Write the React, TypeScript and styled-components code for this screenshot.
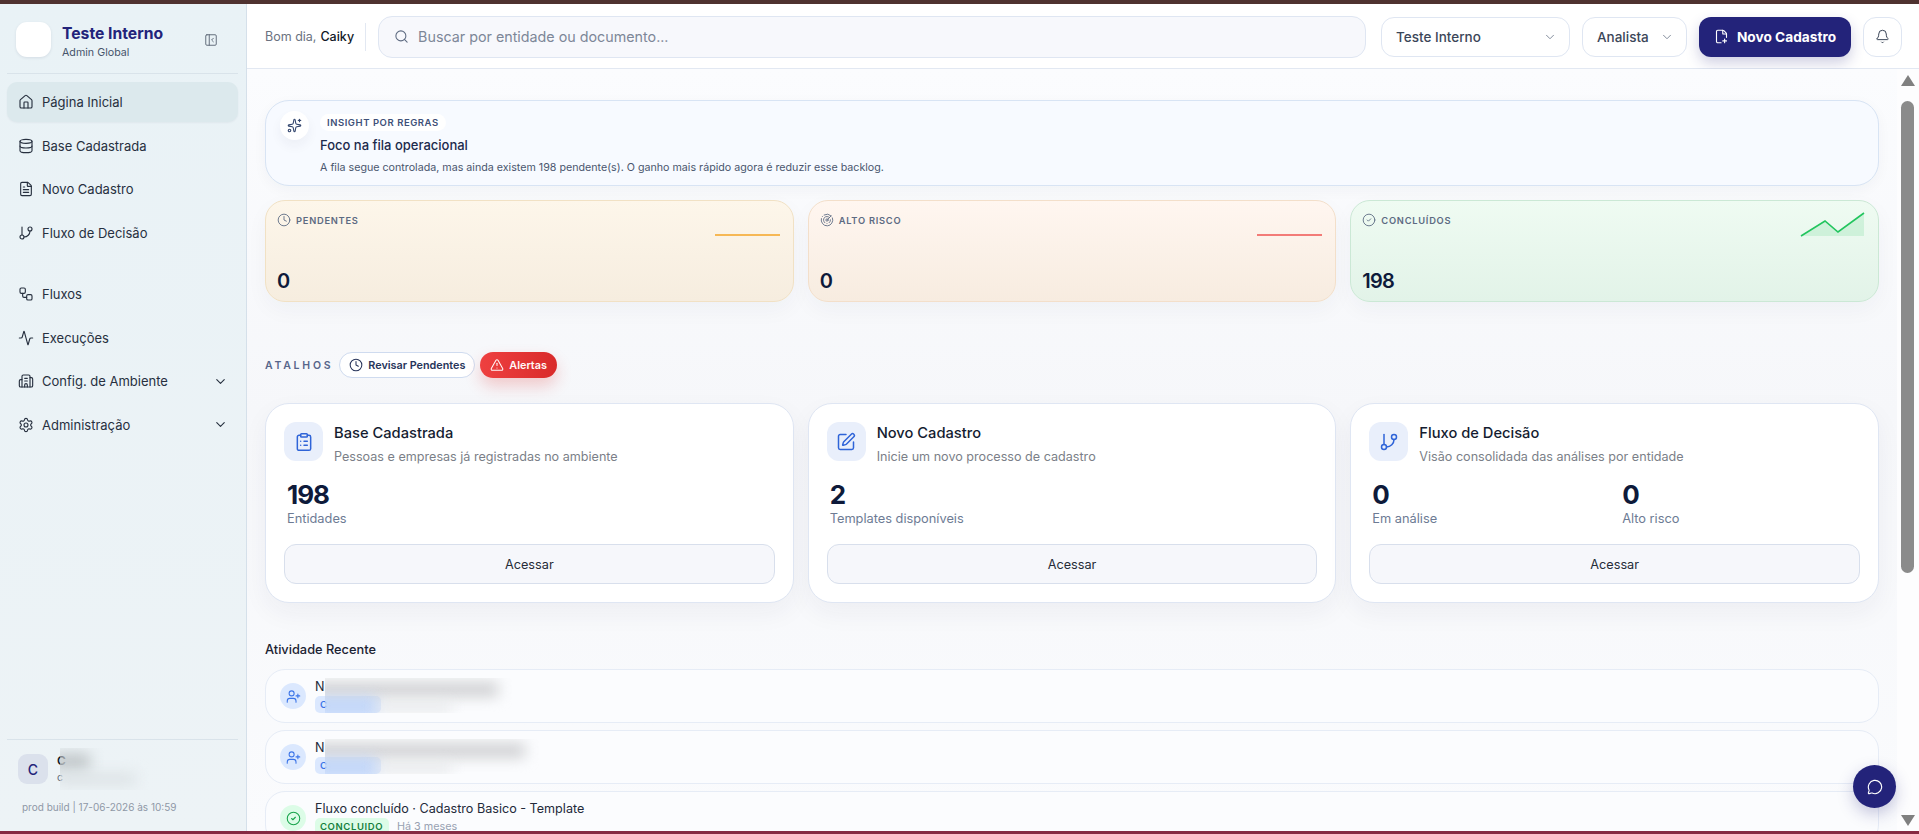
import React from "react";
import styled, { createGlobalStyle } from "styled-components";
import {
  Activity,
  Bell,
  Building2,
  ChevronDown,
  CircleCheck,
  ClipboardList,
  Clock,
  Database,
  FilePlusCorner,
  FileText,
  GitBranch,
  House,
  MessageCircle,
  PanelLeftClose,
  Radar,
  Search,
  Settings,
  Sparkles,
  SquarePen,
  TriangleAlert,
  UserPlus,
  Workflow,
} from "lucide-react";

const NAVY = "#23237a";
const FONT = `Inter, "Noto Sans", "Liberation Sans", sans-serif`;

const GlobalStyle = createGlobalStyle`
  html, body {
    margin: 0;
    padding: 0;
    height: 100%;
    overflow: hidden;
    font-family: ${FONT};
    color: #111827;
  }
  #root { height: 100%; }
  * { box-sizing: border-box; }
`;

const Page = styled.div`
  height: 100vh;
  display: flex;
  flex-direction: column;
`;

const WindowStrip = styled.div<{ $color: string; $height: number }>`
  flex: none;
  height: ${(p) => p.$height}px;
  background: ${(p) => p.$color};
`;

const Body = styled.div`
  position: relative;
  flex: 1;
  min-height: 0;
  display: flex;
`;

/* Sidebar */
const Sidebar = styled.aside`
  flex: none;
  width: 247px;
  display: flex;
  flex-direction: column;
  padding: 0 8px 0 7px;
  background: linear-gradient(180deg, #e9f2f6 0%, #edf3f6 100%);
  border-right: 1px solid #d5e0ea;
`;

const Brand = styled.div`
  height: 70px;
  display: flex;
  align-items: flex-start;
  padding: 18px 0 0 9px;
  border-bottom: 1px solid #d9e3ea;
  flex: none;
`;

const LogoBox = styled.div`
  width: 35px;
  height: 35px;
  border-radius: 11px;
  background: #fff;
  box-shadow: 0 1px 3px rgba(30, 41, 80, 0.1);
  flex: none;
`;

const BrandText = styled.div`
  margin-left: 11px;
  padding-top: 2px;
  flex: 1;
  display: flex;
  flex-direction: column;
`;

const BrandTitle = styled.div`
  font-size: 15.7px;
  line-height: 20px;
  font-weight: 700;
  color: ${NAVY};
`;

const BrandSub = styled.div`
  font-size: 10.7px;
  line-height: 16px;
  margin-top: 1px;
  color: #46546b;
`;

const CollapseButton = styled.span`
  display: flex;
  margin: 11px 20px 0 0;
  color: #5b6675;
`;

const Nav = styled.nav`
  display: flex;
  flex-direction: column;
  gap: 3.5px;
  padding-top: 8px;
`;

const NavItem = styled.div<{ $active?: boolean; $spaced?: boolean }>`
  height: 40px;
  display: flex;
  align-items: center;
  gap: 8px;
  padding: 0 10px 0 11px;
  border-radius: 10px;
  font-size: 13px;
  color: #27303f;
  background: ${(p) => (p.$active ? "#dce9ed" : "transparent")};
  margin-top: ${(p) => (p.$spaced ? "18px" : "0")};
  box-shadow: ${(p) => (p.$active ? "0 1px 2px rgba(30,41,80,.05)" : "none")};
`;

const NavLabel = styled.span`
  flex: 1;
`;

const UserFooter = styled.div`
  margin-top: auto;
  border-top: 1px solid #d9e3ea;
  padding: 12px 0 0 11px;
  height: 92px;
  flex: none;
  position: relative;
`;

const UserRow = styled.div`
  display: flex;
  align-items: center;
  gap: 9px;
`;

const UserAvatar = styled.div`
  width: 30px;
  height: 30px;
  border-radius: 9px;
  background: #dbe1ec;
  color: ${NAVY};
  font-size: 14px;
  font-weight: 500;
  display: flex;
  align-items: center;
  justify-content: center;
`;

const UserText = styled.div`
  display: flex;
  flex-direction: column;
  font-size: 12px;
  line-height: 17px;
  font-weight: 600;
`;

const UserMail = styled.span`
  font-size: 10.5px;
  font-weight: 400;
  color: #5f6b7c;
`;

const BuildInfo = styled.div`
  margin: 15px 0 0 4px;
  font-size: 10px;
  color: #8f98a6;
`;

/* Blurred parts of the screenshot */
const Redaction = styled.div<{ $left: number; $top: number; $width: number; $height: number }>`
  position: absolute;
  left: ${(p) => p.$left}px;
  top: ${(p) => p.$top}px;
  width: ${(p) => p.$width}px;
  height: ${(p) => p.$height}px;
  overflow: hidden;
`;

const Smudge = styled.div<{ $left: number; $top: number; $width: number; $height: number; $color: string; $blur?: number }>`
  position: absolute;
  left: ${(p) => p.$left}px;
  top: ${(p) => p.$top}px;
  width: ${(p) => p.$width}px;
  height: ${(p) => p.$height}px;
  background: ${(p) => p.$color};
  filter: blur(${(p) => p.$blur ?? 7}px);
`;

/* Header */
const Column = styled.div`
  flex: 1;
  min-width: 0;
  display: flex;
  flex-direction: column;
`;

const Header = styled.header`
  flex: none;
  height: 65px;
  display: flex;
  align-items: center;
  gap: 12px;
  padding: 1px 17px 0 18px;
  background: #fff;
  border-bottom: 1px solid #e2e8f2;
`;

const Greeting = styled.div`
  flex: none;
  display: flex;
  align-items: center;
  height: 28px;
  padding-right: 11px;
  border-right: 1px solid #e2e8f2;
  font-size: 12.5px;
  color: #6b7280;
  white-space: nowrap;
`;

const GreetingName = styled.b`
  margin-left: 4px;
  font-weight: 500;
  color: #111827;
`;

const SearchBox = styled.div`
  flex: 1;
  height: 42px;
  display: flex;
  align-items: center;
  gap: 9px;
  margin-right: 3px;
  padding: 0 15px;
  border: 1px solid #dfe6f2;
  border-radius: 14px;
  background: #f7f8fc;
  font-size: 14.3px;
  color: #7d8798;
`;

const SelectBox = styled.div<{ $width: number }>`
  flex: none;
  width: ${(p) => p.$width}px;
  height: 40px;
  display: flex;
  align-items: center;
  justify-content: space-between;
  padding: 0 12px 0 14px;
  background: #fff;
  border: 1px solid #dfe6f2;
  border-radius: 13px;
  font-size: 13.5px;
  font-weight: 500;
  color: #3b4658;
`;

const PrimaryButton = styled.div`
  flex: none;
  width: 152px;
  height: 40px;
  display: flex;
  align-items: center;
  justify-content: center;
  gap: 8px;
  border-radius: 12px;
  background: ${NAVY};
  color: #fff;
  font-size: 13.7px;
  font-weight: 700;
  box-shadow: 0 6px 14px rgba(35, 35, 122, 0.22);
`;

const BellButton = styled.div`
  flex: none;
  width: 39px;
  height: 40px;
  display: flex;
  align-items: center;
  justify-content: center;
  background: #fff;
  border: 1px solid #dfe6f2;
  border-radius: 13px;
  color: #3b4658;
`;

/* Content */
const ContentRow = styled.div`
  flex: 1;
  min-height: 0;
  display: flex;
`;

const Main = styled.main`
  flex: 1;
  min-width: 0;
  overflow: hidden;
  padding: 31px 18px 0 18px;
  background: linear-gradient(180deg, #fbfcfe 0%, #f6f7fa 45%, #fafbfd 100%);
  display: flex;
  flex-direction: column;
`;

const ScrollRail = styled.div`
  flex: none;
  width: 22px;
  display: flex;
  flex-direction: column;
  align-items: center;
  padding: 6px 1px 5px 0;
  background: #fdfdfe;
`;

const ScrollArrow = styled.div<{ $down?: boolean }>`
  flex: none;
  width: 0;
  height: 0;
  border-left: 7.5px solid transparent;
  border-right: 7.5px solid transparent;
  ${(p) => (p.$down ? "border-top: 11px solid #808080;" : "border-bottom: 11px solid #808080;")}
`;

const ScrollThumb = styled.div`
  flex: none;
  width: 13px;
  height: 472px;
  margin-top: 15px;
  margin-bottom: auto;
  border-radius: 7px;
  background: #8b8b8b;
`;

const InsightCard = styled.section`
  flex: none;
  height: 86px;
  display: flex;
  gap: 11px;
  padding: 10px 14px;
  background: #f7faff;
  border: 1px solid #d8e4f4;
  border-radius: 24px;
  box-shadow: 0 4px 14px rgba(30, 41, 80, 0.04);
`;

const InsightIcon = styled.div`
  width: 29px;
  height: 29px;
  flex: none;
  border-radius: 50%;
  background: #fff;
  color: #33466e;
  display: flex;
  align-items: center;
  justify-content: center;
  box-shadow: 0 6px 12px rgba(30, 41, 80, 0.05);
`;

const InsightBody = styled.div`
  display: flex;
  flex-direction: column;
  align-items: flex-start;
`;

const InsightPill = styled.span`
  margin-top: 3px;
  height: 17px;
  display: flex;
  align-items: center;
  padding: 0 7px;
  border-radius: 9px;
  background: #fff;
  font-size: 9.5px;
  font-weight: 600;
  letter-spacing: 0.55px;
  color: #3e5078;
`;

const InsightTitle = styled.div`
  margin-top: 5px;
  font-size: 13px;
  line-height: 18px;
  font-weight: 500;
  color: #1c2a4c;
`;

const InsightText = styled.div`
  margin-top: 6px;
  font-size: 10.7px;
  line-height: 15px;
  color: #4a566e;
`;

const StatGrid = styled.div`
  flex: none;
  display: grid;
  grid-template-columns: repeat(3, 1fr);
  gap: 14px;
  margin-top: 14px;
`;

const StatCard = styled.div<{ $from: string; $to: string; $border: string }>`
  position: relative;
  height: 102px;
  padding: 12px 11px 7px;
  display: flex;
  flex-direction: column;
  justify-content: space-between;
  border: 1px solid ${(p) => p.$border};
  border-radius: 20px;
  background: linear-gradient(180deg, ${(p) => p.$from}, ${(p) => p.$to});
  box-shadow: 0 8px 22px rgba(30, 41, 80, 0.04);
`;

const StatLabel = styled.div`
  display: flex;
  align-items: center;
  gap: 5px;
  height: 14px;
  font-size: 9.3px;
  font-weight: 600;
  letter-spacing: 0.75px;
  color: #5c6a82;
`;

const StatValue = styled.div`
  font-size: 20px;
  line-height: 26px;
  font-weight: 600;
  letter-spacing: -0.8px;
  color: #0e1a3a;
`;

const Spark = styled.svg`
  position: absolute;
  right: 13px;
  top: 11px;
  width: 65px;
  height: 26px;
`;

const ShortcutBar = styled.div`
  flex: none;
  display: flex;
  align-items: center;
  margin-top: 50px;
`;

const ShortcutTitle = styled.span`
  font-size: 10.5px;
  font-weight: 600;
  letter-spacing: 2.75px;
  color: #57658a;
  margin-right: 6px;
`;

const ShortcutPill = styled.div<{ $danger?: boolean }>`
  height: 26px;
  display: flex;
  align-items: center;
  gap: 5px;
  margin-right: 5px;
  padding: 0 ${(p) => (p.$danger ? "10px" : "9px")};
  border-radius: 13px;
  font-size: 10.8px;
  font-weight: 600;
  ${(p) =>
    p.$danger
      ? `color: #fff8f8;
         background: linear-gradient(90deg, #ee4040, #d92a2a);
         box-shadow: 0 8px 16px rgba(220, 38, 38, 0.22);`
      : `color: #27345a;
         background: #fff;
         border: 1px solid #cfdbef;`}
`;

const CardGrid = styled.div`
  flex: none;
  display: grid;
  grid-template-columns: repeat(3, 1fr);
  gap: 14px;
  margin-top: 25px;
`;

const ActionCard = styled.div`
  height: 200px;
  padding: 18px 18px 18px;
  display: flex;
  flex-direction: column;
  background: #fff;
  border: 1px solid #dfe6f3;
  border-radius: 24px;
  box-shadow: 0 10px 26px rgba(30, 41, 80, 0.05);
`;

const CardHead = styled.div`
  display: flex;
  gap: 11px;
`;

const CardIcon = styled.div`
  width: 39px;
  height: 39px;
  flex: none;
  display: flex;
  align-items: center;
  justify-content: center;
  border-radius: 12px;
  background: #e9effb;
  color: #2f64d8;
`;

const CardTitle = styled.div`
  margin-top: 1px;
  font-size: 14.7px;
  line-height: 20px;
  font-weight: 500;
  color: #141c30;
`;

const CardDesc = styled.div`
  margin-top: 6px;
  font-size: 12.6px;
  line-height: 16px;
  color: #7b7f88;
`;

const Metrics = styled.div`
  display: grid;
  grid-template-columns: repeat(2, 1fr);
  gap: 12px;
  margin-top: 15px;
  padding-left: 3px;
`;

const Metric = styled.div`
  display: flex;
  flex-direction: column;
`;

const MetricValue = styled.div`
  font-size: 26px;
  line-height: 30px;
  font-weight: 700;
  letter-spacing: -1px;
  color: #0e1a3a;
`;

const MetricLabel = styled.div`
  margin-top: 1px;
  font-size: 12.8px;
  line-height: 16px;
  color: #6d7b94;
`;

const AccessButton = styled.div`
  margin-top: auto;
  height: 40px;
  display: flex;
  align-items: center;
  justify-content: center;
  background: #f6f7fb;
  border: 1px solid #d8dfec;
  border-radius: 12px;
  font-size: 12.7px;
  font-weight: 400;
  color: #262c38;
`;

const SectionTitle = styled.h2`
  flex: none;
  margin: 39px 0 0;
  font-size: 12.8px;
  line-height: 16px;
  font-weight: 500;
  color: #1c2333;
`;

const ActivityList = styled.div`
  flex: none;
  display: flex;
  flex-direction: column;
  gap: 7px;
  margin-top: 11px;
`;

const ActivityRow = styled.div`
  position: relative;
  flex: none;
  height: 54px;
  display: flex;
  align-items: center;
  gap: 9px;
  padding: 0 14px;
  background: #fbfcfe;
  border: 1px solid #e6ecf6;
  border-radius: 20px;
`;

const ActivityIcon = styled.div<{ $tone: "blue" | "green" }>`
  width: 26px;
  height: 26px;
  flex: none;
  display: flex;
  align-items: center;
  justify-content: center;
  border-radius: 50%;
  background: ${(p) => (p.$tone === "blue" ? "#dbe8fe" : "#dcfce7")};
  color: ${(p) => (p.$tone === "blue" ? "#3b74e8" : "#16a34a")};
`;

const ActivityBody = styled.div`
  display: flex;
  flex-direction: column;
  gap: 1px;
`;

const ActivityTitle = styled.div`
  font-size: 12.6px;
  line-height: 16px;
  color: #232a3a;
`;

const ActivityMeta = styled.div`
  display: flex;
  align-items: center;
  gap: 8px;
`;

const Badge = styled.span<{ $tone: "blue" | "green"; $width: number }>`
  width: ${(p) => p.$width}px;
  height: 17px;
  display: flex;
  align-items: center;
  padding-left: 5px;
  border-radius: 5px;
  font-size: 9.5px;
  font-weight: 600;
  letter-spacing: 0.6px;
  background: ${(p) => (p.$tone === "blue" ? "#dbe8fe" : "#dcfce7")};
  color: ${(p) => (p.$tone === "blue" ? "#3b74e8" : "#15803d")};
`;

const MetaTime = styled.span`
  font-size: 10.8px;
  color: #98a1b2;
`;

const ChatFab = styled.div`
  position: absolute;
  right: 23px;
  bottom: 23px;
  width: 43px;
  height: 43px;
  display: flex;
  align-items: center;
  justify-content: center;
  border-radius: 50%;
  background: ${NAVY};
  color: #fff;
  box-shadow: 0 6px 16px rgba(35, 35, 122, 0.25);
`;

const NAV_ITEMS = [
  { label: "Página Inicial", icon: House, active: true },
  { label: "Base Cadastrada", icon: Database },
  { label: "Novo Cadastro", icon: FileText },
  { label: "Fluxo de Decisão", icon: GitBranch },
  { label: "Fluxos", icon: Workflow, spaced: true },
  { label: "Execuções", icon: Activity },
  { label: "Config. de Ambiente", icon: Building2, chevron: true },
  { label: "Administração", icon: Settings, chevron: true },
];

const STATS = [
  { label: "PENDENTES", icon: Clock, value: "0", from: "#fdf6ea", to: "#f6eddf", border: "#f1e1c4", line: "#f5a524" },
  { label: "ALTO RISCO", icon: Radar, value: "0", from: "#fff6f0", to: "#f7ece0", border: "#f3dfca", line: "#ef5350" },
  { label: "CONCLUÍDOS", icon: CircleCheck, value: "198", from: "#effbf2", to: "#e2f3e8", border: "#cbe8d5", line: "#22c55e", rising: true },
];

const CARDS = [
  {
    title: "Base Cadastrada",
    desc: "Pessoas e empresas já registradas no ambiente",
    icon: ClipboardList,
    metrics: [{ value: "198", label: "Entidades" }],
  },
  {
    title: "Novo Cadastro",
    desc: "Inicie um novo processo de cadastro",
    icon: SquarePen,
    metrics: [{ value: "2", label: "Templates disponíveis" }],
  },
  {
    title: "Fluxo de Decisão",
    desc: "Visão consolidada das análises por entidade",
    icon: GitBranch,
    metrics: [
      { value: "0", label: "Em análise" },
      { value: "0", label: "Alto risco" },
    ],
  },
];

function BlurredEntry({ width }: { width: number }) {
  return (
    <Redaction $left={59} $top={8} $width={width + 40} $height={35}>
      <Smudge $left={-12} $top={4} $width={width} $height={15} $color="#d0d1d3" />
      <Smudge $left={-10} $top={20} $width={62} $height={16} $color="#c0d5f8" />
      <Smudge $left={52} $top={24} $width={75} $height={10} $color="#e6e8ea" />
    </Redaction>
  );
}

export default function App() {
  return (
    <Page>
      <GlobalStyle />
      <WindowStrip $color="#4f3230" $height={4} />
      <Body>
        <Sidebar>
          <Brand>
            <LogoBox />
            <BrandText>
              <BrandTitle>Teste Interno</BrandTitle>
              <BrandSub>Admin Global</BrandSub>
            </BrandText>
            <CollapseButton>
              <PanelLeftClose size={14} strokeWidth={1.6} />
            </CollapseButton>
          </Brand>
          <Nav>
            {NAV_ITEMS.map((item) => (
              <NavItem key={item.label} $active={item.active} $spaced={item.spaced}>
                <item.icon size={16} strokeWidth={1.7} />
                <NavLabel>{item.label}</NavLabel>
                {item.chevron && <ChevronDown size={15} strokeWidth={1.8} />}
              </NavItem>
            ))}
          </Nav>
          <UserFooter>
            <UserRow>
              <UserAvatar>C</UserAvatar>
              <UserText>
                C
                <UserMail>c</UserMail>
              </UserText>
            </UserRow>
            <BuildInfo>prod build | 17-06-2026 às 10:59</BuildInfo>
            <Redaction $left={53} $top={8} $width={95} $height={42}>
              <Smudge $left={-8} $top={5} $width={38} $height={18} $color="#c2c8ca" />
              <Smudge $left={-4} $top={25} $width={80} $height={12} $color="#dce2e5" />
            </Redaction>
          </UserFooter>
        </Sidebar>

        <Column>
          <Header>
            <Greeting>
              Bom dia,<GreetingName>Caiky</GreetingName>
            </Greeting>
            <SearchBox>
              <Search size={15} strokeWidth={1.7} color="#5d6a80" />
              Buscar por entidade ou documento...
            </SearchBox>
            <SelectBox $width={189}>
              Teste Interno
              <ChevronDown size={14} strokeWidth={1.6} color="#7b8596" />
            </SelectBox>
            <SelectBox $width={105}>
              Analista
              <ChevronDown size={14} strokeWidth={1.6} color="#7b8596" />
            </SelectBox>
            <PrimaryButton>
              <FilePlusCorner size={15} strokeWidth={1.8} />
              Novo Cadastro
            </PrimaryButton>
            <BellButton>
              <Bell size={15} strokeWidth={1.6} />
            </BellButton>
          </Header>

          <ContentRow>
            <Main>
              <InsightCard>
                <InsightIcon>
                  <Sparkles size={15} strokeWidth={1.8} />
                </InsightIcon>
                <InsightBody>
                  <InsightPill>INSIGHT POR REGRAS</InsightPill>
                  <InsightTitle>Foco na fila operacional</InsightTitle>
                  <InsightText>
                    A fila segue controlada, mas ainda existem 198 pendente(s). O ganho mais rápido agora é reduzir esse backlog.
                  </InsightText>
                </InsightBody>
              </InsightCard>

              <StatGrid>
                {STATS.map((stat) => (
                  <StatCard key={stat.label} $from={stat.from} $to={stat.to} $border={stat.border}>
                    <StatLabel>
                      <stat.icon size={14} strokeWidth={1.5} />
                      {stat.label}
                    </StatLabel>
                    <StatValue>{stat.value}</StatValue>
                    <Spark viewBox="0 0 65 26">
                      {stat.rising ? (
                        <>
                          <path d="M1 24 L25 9 L38 20 L64 1 L64 24 Z" fill={stat.line} fillOpacity={0.14} />
                          <path d="M1 24 L25 9 L38 20 L64 1" fill="none" stroke={stat.line} strokeWidth={1.6} />
                        </>
                      ) : (
                        <path d="M0 23 L65 23" fill="none" stroke={stat.line} strokeWidth={1.6} />
                      )}
                    </Spark>
                  </StatCard>
                ))}
              </StatGrid>

              <ShortcutBar>
                <ShortcutTitle>ATALHOS</ShortcutTitle>
                <ShortcutPill>
                  <Clock size={14} strokeWidth={1.8} />
                  Revisar Pendentes
                </ShortcutPill>
                <ShortcutPill $danger>
                  <TriangleAlert size={14} strokeWidth={1.8} />
                  Alertas
                </ShortcutPill>
              </ShortcutBar>

              <CardGrid>
                {CARDS.map((card) => (
                  <ActionCard key={card.title}>
                    <CardHead>
                      <CardIcon>
                        <card.icon size={20} strokeWidth={1.8} />
                      </CardIcon>
                      <div>
                        <CardTitle>{card.title}</CardTitle>
                        <CardDesc>{card.desc}</CardDesc>
                      </div>
                    </CardHead>
                    <Metrics>
                      {card.metrics.map((metric) => (
                        <Metric key={metric.label}>
                          <MetricValue>{metric.value}</MetricValue>
                          <MetricLabel>{metric.label}</MetricLabel>
                        </Metric>
                      ))}
                    </Metrics>
                    <AccessButton>Acessar</AccessButton>
                  </ActionCard>
                ))}
              </CardGrid>

              <SectionTitle>Atividade Recente</SectionTitle>
              <ActivityList>
                <ActivityRow>
                  <ActivityIcon $tone="blue">
                    <UserPlus size={15} strokeWidth={1.7} />
                  </ActivityIcon>
                  <ActivityBody>
                    <ActivityTitle>N</ActivityTitle>
                    <ActivityMeta>
                      <Badge $tone="blue" $width={66}>C</Badge>
                    </ActivityMeta>
                  </ActivityBody>
                  <BlurredEntry width={185} />
                </ActivityRow>
                <ActivityRow>
                  <ActivityIcon $tone="blue">
                    <UserPlus size={15} strokeWidth={1.7} />
                  </ActivityIcon>
                  <ActivityBody>
                    <ActivityTitle>N</ActivityTitle>
                    <ActivityMeta>
                      <Badge $tone="blue" $width={66}>C</Badge>
                    </ActivityMeta>
                  </ActivityBody>
                  <BlurredEntry width={212} />
                </ActivityRow>
                <ActivityRow>
                  <ActivityIcon $tone="green">
                    <CircleCheck size={15} strokeWidth={1.7} />
                  </ActivityIcon>
                  <ActivityBody>
                    <ActivityTitle>Fluxo concluído · Cadastro Basico - Template</ActivityTitle>
                    <ActivityMeta>
                      <Badge $tone="green" $width={74}>CONCLUIDO</Badge>
                      <MetaTime>Há 3 meses</MetaTime>
                    </ActivityMeta>
                  </ActivityBody>
                </ActivityRow>
              </ActivityList>
            </Main>
            <ScrollRail>
              <ScrollArrow />
              <ScrollThumb />
              <ScrollArrow $down />
            </ScrollRail>
          </ContentRow>
        </Column>
        <ChatFab>
          <MessageCircle size={16} strokeWidth={1.7} />
        </ChatFab>
      </Body>
      <WindowStrip $color="#862a42" $height={3} />
    </Page>
  );
}
